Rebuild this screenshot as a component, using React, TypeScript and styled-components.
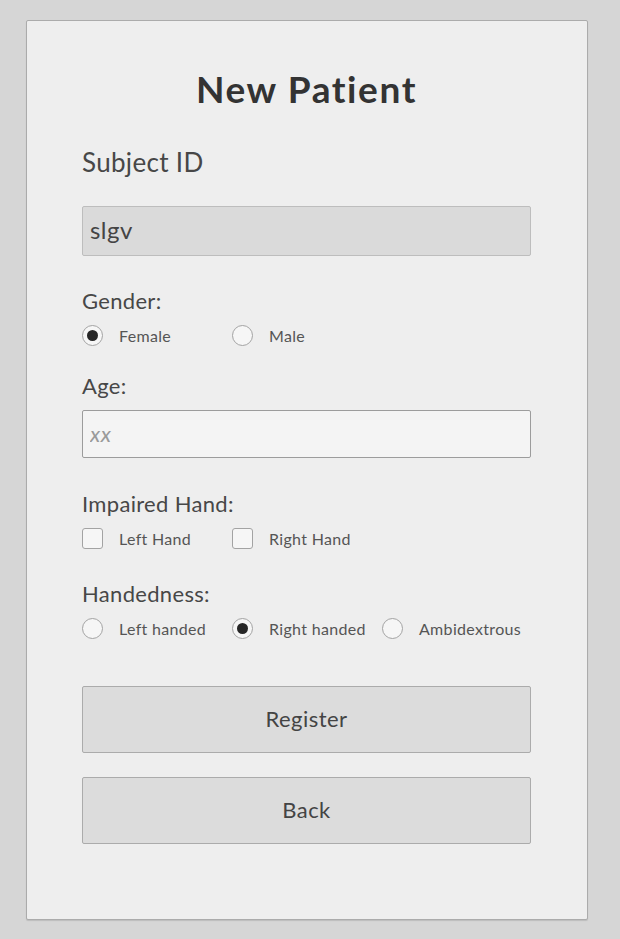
import React, { FC } from 'react';
import styled, { createGlobalStyle } from 'styled-components';

const GlobalStyle = createGlobalStyle`
  html, body {
    margin: 0;
    padding: 0;
    background: #d6d6d6;
  }

  body {
    font-family: Lato, "Noto Sans", sans-serif;
    letter-spacing: 0.02em;
    color: #444;
  }
`;

const Page = styled.div`
  padding: 20px 32px 20px 26px;
`;

const Panel = styled.form`
  box-sizing: border-box;
  height: 900px;
  padding: 46px 56px 0 55px;
  background: #eeeeee;
  border: 1px solid #ababab;
  border-radius: 2px;
  box-shadow: 0 1px 1px rgba(0, 0, 0, 0.12);

  display: flex;
  flex-direction: column;
`;

const Title = styled.h1`
  margin: 0 0 35px;
  font-size: 37px;
  line-height: 44px;
  font-weight: 700;
  letter-spacing: 1.6px;
  text-align: center;
  color: #333;
`;

const FieldLabel = styled.label<{ $big?: boolean; $gap: number }>`
  display: block;
  margin-top: ${(p) => p.$gap}px;
  font-size: ${(p) => (p.$big ? 26 : 22)}px;
  line-height: ${(p) => (p.$big ? 32 : 26)}px;
  color: #474747;
`;

const TextInput = styled.input<{ $filled?: boolean; $gap: number }>`
  box-sizing: border-box;
  width: 100%;
  height: ${(p) => (p.$filled ? 50 : 48)}px;
  margin-top: ${(p) => p.$gap}px;
  padding: 0 7px 3px;
  font-family: inherit;
  font-size: 24px;
  letter-spacing: 0.02em;
  color: #444;
  background: ${(p) => (p.$filled ? '#dadada' : '#f4f4f4')};
  border: 1px solid ${(p) => (p.$filled ? '#bdbdbd' : '#9c9c9c')};
  border-radius: 2px;
  outline: none;

  &::placeholder {
    color: #9a9a9a;
    font-style: italic;
    font-size: 22px;
  }
`;

const OptionRow = styled.div`
  display: grid;
  grid-template-columns: repeat(3, 150px);
  height: 22px;
  margin-top: 10px;
`;

const Option = styled.label`
  display: flex;
  align-items: center;
  gap: 16px;
  font-size: 16px;
  color: #555;
  white-space: nowrap;
`;

const RadioMark = styled.input.attrs({ type: 'radio' })`
  appearance: none;
  box-sizing: border-box;
  width: 21px;
  height: 21px;
  margin: 0;
  border: 1px solid #a3a3a3;
  border-radius: 50%;
  background: #f6f6f6;
  display: grid;
  place-items: center;

  &:checked::after {
    content: '';
    width: 11px;
    height: 11px;
    border-radius: 50%;
    background: #262626;
  }
`;

const CheckMark = styled.input.attrs({ type: 'checkbox' })`
  appearance: none;
  box-sizing: border-box;
  width: 21px;
  height: 21px;
  margin: 0;
  border: 1px solid #a3a3a3;
  border-radius: 3px;
  background: #f6f6f6;
`;

const ActionButton = styled.button<{ $gap: number }>`
  box-sizing: border-box;
  width: 100%;
  height: 67px;
  margin-top: ${(p) => p.$gap}px;
  padding: 0 0 3px;
  font-family: inherit;
  font-size: 22px;
  letter-spacing: 0.02em;
  color: #444;
  background: #dcdcdc;
  border: 1px solid #ababab;
  border-radius: 2px;
`;

const App: FC = () => {
  return (
    <>
      <GlobalStyle />
      <Page>
        <Panel onSubmit={(e) => e.preventDefault()}>
          <Title>New Patient</Title>

          <FieldLabel $big $gap={0}>Subject ID</FieldLabel>
          <TextInput $filled $gap={28} defaultValue="slgv" />

          <FieldLabel $gap={32}>Gender:</FieldLabel>
          <OptionRow>
            <Option><RadioMark name="gender" defaultChecked />Female</Option>
            <Option><RadioMark name="gender" />Male</Option>
          </OptionRow>

          <FieldLabel $gap={27}>Age:</FieldLabel>
          <TextInput $gap={11} placeholder="xx" />

          <FieldLabel $gap={33}>Impaired Hand:</FieldLabel>
          <OptionRow>
            <Option><CheckMark />Left Hand</Option>
            <Option><CheckMark />Right Hand</Option>
          </OptionRow>

          <FieldLabel $gap={32}>Handedness:</FieldLabel>
          <OptionRow>
            <Option><RadioMark name="hand" />Left handed</Option>
            <Option><RadioMark name="hand" defaultChecked />Right handed</Option>
            <Option><RadioMark name="hand" />Ambidextrous</Option>
          </OptionRow>

          <ActionButton type="submit" $gap={47}>Register</ActionButton>
          <ActionButton type="button" $gap={24}>Back</ActionButton>
        </Panel>
      </Page>
    </>
  );
};

export default App;
